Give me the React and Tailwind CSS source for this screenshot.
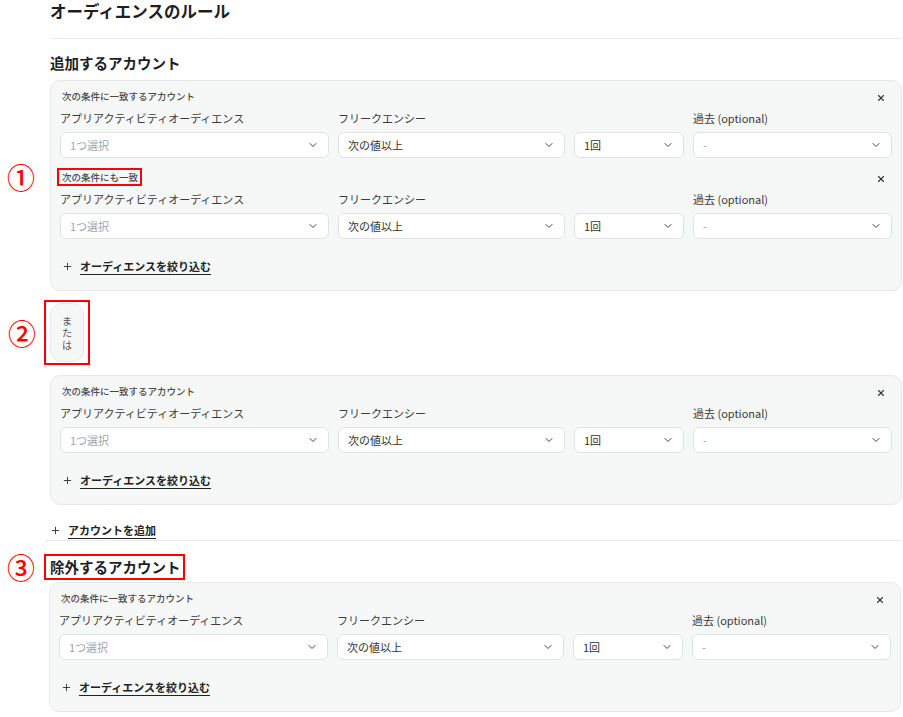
import React from "react";
import { ChevronDown, X, Plus } from "lucide-react";

const font = { fontFamily: '"Noto Sans CJK JP", "Noto Sans", sans-serif' };

const Circle = ({ n, className }) => (
  <span
    className={`absolute top-1/2 -translate-y-1/2 text-[28px] font-medium leading-none text-[#ff0000] ${className}`}
  >
    {n}
  </span>
);

const RedBox = ({ className }) => (
  <span className={`pointer-events-none absolute border-2 border-[#ff0000] ${className}`} />
);

const Select = ({ value, placeholder }) => (
  <div className="flex h-[26px] items-center justify-between rounded-[6px] border border-[#dfe3e6] bg-white pl-[9px] pr-[9px] text-[11px]">
    <span className={placeholder ? "text-[#9ba5ae]" : "text-[#333]"}>{value}</span>
    <ChevronDown size={12} strokeWidth={2} className="text-[#444]" />
  </div>
);

const Condition = ({ title, annotated, first }) => (
  <div className={first ? "" : "mt-[12px]"}>
    <div className="flex h-[14px] items-center justify-between">
      <span className="relative ml-[2px] text-[9.5px] font-medium leading-[14px] text-[#4a4a4a]">
        {title}
        {annotated && (
          <>
            <RedBox className="-left-[5px] -right-[4px] -top-[2px] -bottom-[2px]" />
            <Circle n="①" className="left-[-55px]" />
          </>
        )}
      </span>
      <X size={10} strokeWidth={2.6} className="mr-[6px] mt-[4px] text-[#333]" />
    </div>
    <div className="mt-[7px] grid grid-cols-[269px_227px_110px_199px] gap-x-[9px]">
      <div className="text-[11px] leading-[16px] text-[#3a3a3a]">アプリアクティビティオーディエンス</div>
      <div className="text-[11px] leading-[16px] text-[#3a3a3a]">フリークエンシー</div>
      <div />
      <div className="text-[11px] leading-[16px] text-[#3a3a3a]">過去 (optional)</div>
      <div className="mt-[6px]">
        <Select value="1つ選択" placeholder />
      </div>
      <div className="mt-[6px]">
        <Select value="次の値以上" />
      </div>
      <div className="mt-[6px]">
        <Select value="1回" />
      </div>
      <div className="mt-[6px]">
        <Select value="-" placeholder />
      </div>
    </div>
  </div>
);

const LinkRow = ({ label, className }) => (
  <div className={`flex items-center gap-[7px] leading-[16px] ${className}`}>
    <Plus size={11} strokeWidth={2} className="text-[#333]" />
    <span className="text-[11px] font-bold text-[#222] underline decoration-[1px] underline-offset-[3px]">
      {label}
    </span>
  </div>
);

const Card = ({ children, className = "" }) => (
  <div
    className={`rounded-[10px] border border-[#e6e8ea] bg-[#f6f7f7] px-[9px] pb-[16px] pt-[8px] ${className}`}
  >
    {children}
    <LinkRow label="オーディエンスを絞り込む" className="ml-[2px] mt-[19px]" />
  </div>
);

export default function App() {
  return (
    <div style={font} className="min-h-screen w-[903px] bg-white pl-[50px] pr-[1px] text-[#222]">
      <h1 className="text-[16.5px] font-bold leading-[22px] text-[#1f1f1f]">オーディエンスのルール</h1>
      <div className="mt-[16px] border-t border-[#e8eaec]" />

      <h2 className="mt-[14px] text-[14.5px] font-bold leading-[20px] text-[#1f1f1f]">追加するアカウント</h2>
      <Card className="mt-[7px]">
        <Condition title="次の条件に一致するアカウント" first />
        <Condition title="次の条件にも一致" annotated />
      </Card>

      <div className="relative mt-[12px] flex h-[59px] w-[34px] items-center justify-center rounded-[12px] border border-[#e6e8ea] bg-[#f6f7f7]">
        <span className="w-[10px] break-all text-center text-[10px] leading-[12px] text-[#555]">または</span>
        <RedBox className="-left-[7px] -right-[7px] -top-[4px] -bottom-[4px]" />
        <Circle n="②" className="left-[-43px]" />
      </div>

      <Card className="mt-[13px]">
        <Condition title="次の条件に一致するアカウント" first />
      </Card>

      <LinkRow label="アカウントを追加" className="mt-[17px]" />
      <div className="-ml-[5px] mt-[2px] border-t border-[#e8eaec]" />

      <div className="mt-[16px] flex">
        <h2 className="relative text-[14.5px] font-bold leading-[20px] text-[#1f1f1f]">
          除外するアカウント
          <RedBox className="-left-[6px] -right-[4px] -top-[3px] -bottom-[3px]" />
          <Circle n="③" className="left-[-43px]" />
        </h2>
      </div>
      <Card className="-ml-px mr-px mt-[5px]">
        <Condition title="次の条件に一致するアカウント" first />
      </Card>
    </div>
  );
}
